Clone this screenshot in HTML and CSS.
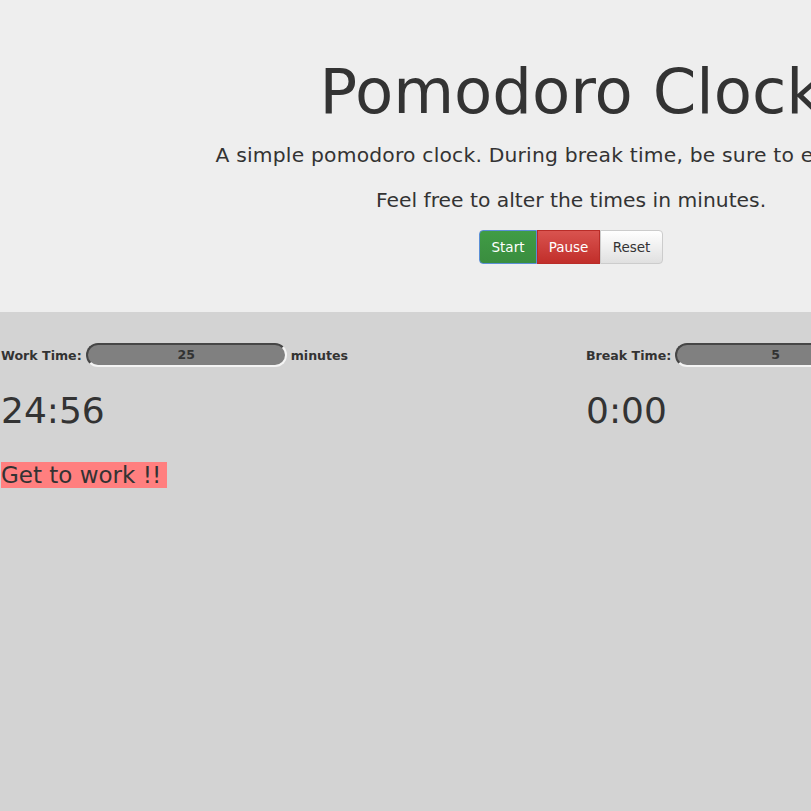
FILE: index.html
```html
<!DOCTYPE html>
<html>
<head>
<meta charset="utf-8">
<link rel="stylesheet" href="styles.css">
</head>
<body>
<div class="page">
  <header class="jumbotron">
    <h1 class="title">Pomodoro Clock</h1>
    <p class="lead lead-wide">A simple pomodoro clock. During break time, be sure to eat a snack.</p>
    <p class="lead">Feel free to alter the times in minutes.</p>
    <div class="btn-group">
      <button class="btn btn-start">Start</button>
      <button class="btn btn-pause">Pause</button>
      <button class="btn btn-reset">Reset</button>
    </div>
  </header>
  <main class="clocks">
    <section class="col col-work">
      <div class="setting">
        <label class="label">Work Time:</label>
        <div class="pill">25</div>
        <span class="label">minutes</span>
      </div>
      <div class="timer">24:56</div>
      <div class="status"><span class="status-text">Get to work !!</span></div>
    </section>
    <section class="col col-break">
      <div class="setting">
        <label class="label">Break Time:</label>
        <div class="pill">5</div>
        <span class="label">minutes</span>
      </div>
      <div class="timer">0:00</div>
    </section>
  </main>
</div>
</body>
</html>
```

FILE: styles.css
```css
html, body {
  margin: 0;
  padding: 0;
  background: #d3d3d3;
}
body {
  font-family: "DejaVu Sans", "Lucida Grande", sans-serif;
  color: #333;
}
.page {
  width: 1142px;
  min-height: 811px;
  display: flex;
  flex-direction: column;
}
.jumbotron {
  background: #eeeeee;
  height: 312px;
  box-sizing: border-box;
  padding-top: 52px;
  text-align: center;
}
.title {
  margin: 0;
  font-size: 62.5px;
  font-weight: normal;
  line-height: 80px;
}
.lead {
  margin: 6px 0 4px;
  font-size: 20.3px;
  line-height: 35px;
  white-space: nowrap;
}
.lead-wide {
  letter-spacing: 0.2px;
}
.lead + .lead { margin-top: 10px; }
.btn-group {
  display: inline-flex;
  margin-top: 8px;
}
.btn {
  font-family: inherit;
  font-size: 13.5px;
  height: 34px;
  padding: 0 10px;
  border: 1px solid #ccc;
  margin: 0;
  color: #333;
}
.btn-start {
  background: linear-gradient(#409c45, #3a8d3f);
  color: #fff;
  border-color: #5b8fd6;
  border-radius: 4px 0 0 4px;
  width: 58px;
}
.btn-pause {
  background: linear-gradient(#d9534f, #c12e2a);
  color: #fff;
  border-color: #b92c28;
  width: 63px;
}
.btn-reset {
  background: linear-gradient(#ffffff, #e0e0e0);
  border-color: #ccc;
  border-radius: 0 4px 4px 0;
  width: 63px;
}
.clocks {
  flex: 1;
  display: grid;
  grid-template-columns: 571px 571px;
}
.col-work { padding-left: 1px; }
.col-break { padding-left: 15px; }
.setting {
  display: flex;
  align-items: center;
  gap: 4px;
  margin-top: 30px;
  height: 26px;
}
.label {
  font-size: 12.6px;
  font-weight: bold;
  color: #333;
}
.pill {
  width: 197px;
  height: 20px;
  background: #808080;
  border-radius: 12px;
  border: 2px inset #ececec;
  border-top-color: #9a9a9a;
  border-left-color: #9a9a9a;
  border-bottom-color: #f4f4f4;
  border-right-color: #f4f4f4;
  text-align: center;
  font-size: 12.5px;
  font-weight: bold;
  line-height: 20px;
  color: #333;
}
.timer {
  font-size: 36px;
  line-height: 40px;
  margin-top: 23px;
}
.status {
  margin-top: 31px;
}
.status-text {
  background: #ff7f7f;
  font-size: 23px;
  line-height: 26px;
  display: inline-block;
  padding-right: 6px;
}
```
